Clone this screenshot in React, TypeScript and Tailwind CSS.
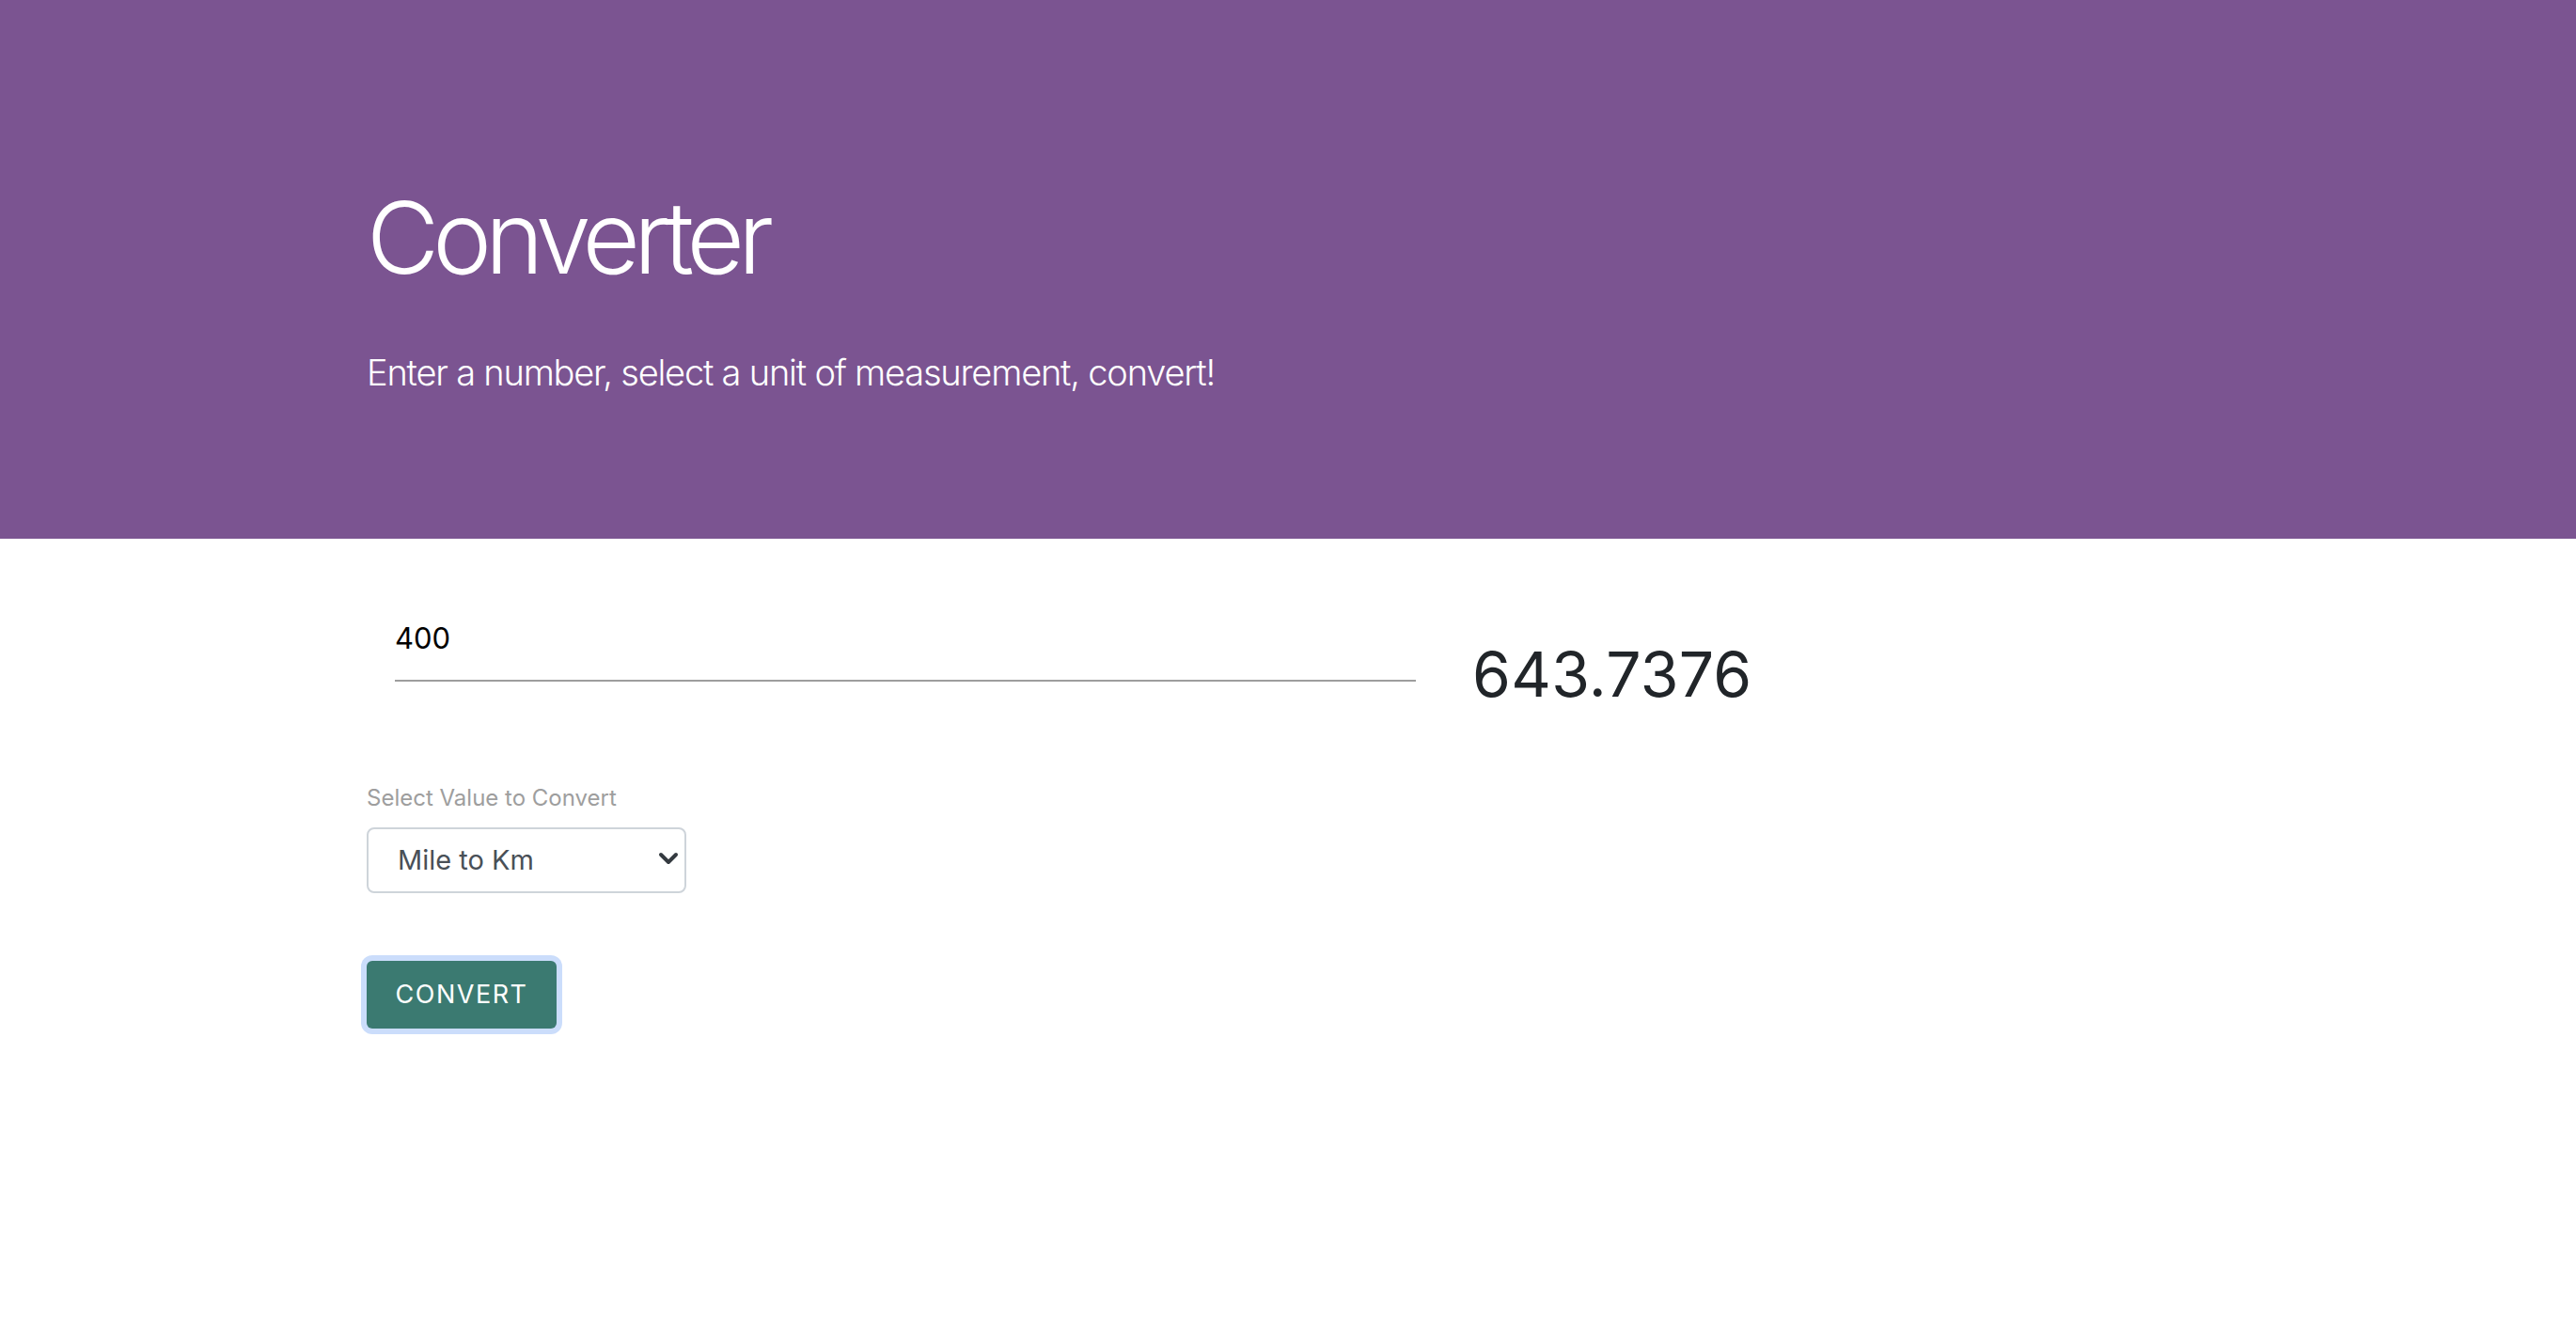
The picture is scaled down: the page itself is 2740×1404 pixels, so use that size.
import { useState } from 'react';

export default function App() {
  const [value, setValue] = useState('400');
  const [unit, setUnit] = useState('mile');
  const [result] = useState('643.7376');

  return (
    <div className="min-h-[1404px] bg-white font-['Inter','Liberation_Sans',sans-serif]">
      {/* Header */}
      <div className="h-[573px] bg-[#7b5491] pl-[390px] pt-[189px]">
        <h1 className="text-[106px] font-light leading-[1.2] text-white tracking-[-7px]">Converter</h1>
        <p className="mt-[52px] text-[38px] font-light leading-[1.5] text-white tracking-[-1.2px]">
          Enter a number, select a unit of measurement, convert!
        </p>
      </div>

      {/* Form */}
      <div className="pl-[390px] pt-[62px]">
        <div className="flex items-start">
          <div className="ml-[30px] w-[1086px]">
            <input
              value={value}
              onChange={e => setValue(e.target.value)}
              className="w-full border-b-2 border-[#9e9e9e] bg-transparent pb-[26px] pt-[25px] text-[31px] leading-[1.2] text-black outline-none"
            />
          </div>
          <div className="ml-[60px] mt-[49px] text-[66px] font-normal leading-none text-[#212529] tracking-[0.3px]">{result}</div>
        </div>

        <div className="mt-[87px] text-[24px] leading-none text-[#9e9e9e]">Select Value to Convert</div>

        <div className="relative mt-[19px] w-[340px]">
          <select
            value={unit}
            onChange={e => setUnit(e.target.value)}
            className="h-[70px] w-full appearance-none rounded-[8px] border-2 border-[#ced4da] bg-white pl-[31px] text-[29px] text-[#495057] outline-none"
          >
            <option value="mile">Mile to Km</option>
            <option value="km">Km to Mile</option>
          </select>
          <svg
            className="pointer-events-none absolute right-[8px] top-[25px]"
            width="22"
            height="16"
            viewBox="0 0 22 16"
            fill="none"
          >
            <path d="M3 4 L11 12 L19 4" stroke="#343a40" strokeWidth="4" strokeLinecap="round" strokeLinejoin="round" />
          </svg>
        </div>

        <button className="mt-[72px] h-[72px] w-[202px] rounded-[6px] bg-[#3b7a71] text-[27px] tracking-[1.5px] text-white ring-[6px] ring-[#cbddfb]">
          CONVERT
        </button>
      </div>
    </div>
  );
}
